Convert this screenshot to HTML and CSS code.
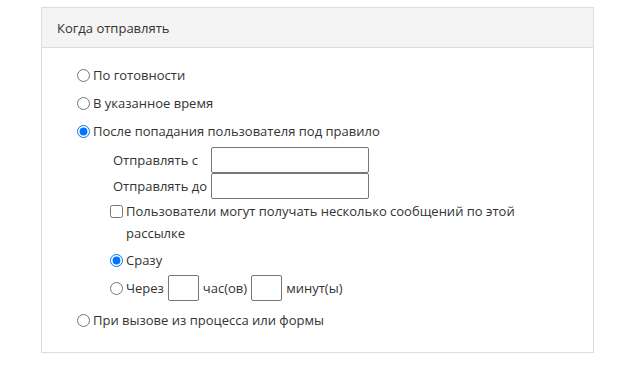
FILE: index.html
```html
<!DOCTYPE html>
<html lang="ru">
<head>
<meta charset="utf-8">
<link rel="stylesheet" href="styles.css">
</head>
<body>
<div class="panel">
  <div class="panel-head">Когда отправлять</div>
  <div class="panel-body">
    <label class="opt"><input type="radio" name="when">По готовности</label>
    <label class="opt"><input type="radio" name="when">В указанное время</label>
    <label class="opt"><input type="radio" name="when" checked>После попадания пользователя под правило</label>
    <div class="sub">
      <div class="field"><span class="flabel">Отправлять с</span><input class="text wide" type="text"></div>
      <div class="field"><span class="flabel">Отправлять до</span><input class="text wide" type="text"></div>
      <label class="check"><input type="checkbox"><span>Пользователи могут получать несколько сообщений по этой рассылке</span></label>
      <label class="opt"><input type="radio" name="delay" checked>Сразу</label>
      <div class="opt"><input type="radio" name="delay">Через<input class="text small" type="text">час(ов)<input class="text small" type="text">минут(ы)</div>
    </div>
    <label class="opt last"><input type="radio" name="when">При вызове из процесса или формы</label>
  </div>
</div>
</body>
</html>
```
FILE: styles.css
```css
html, body { margin: 0; padding: 0; background: #fff; }
body {
  font-family: "Open Sans", "Liberation Sans", sans-serif;
  font-size: 13px;
  color: #333;
}
.panel {
  margin: 7px 0 0 41px;
  width: 551px;
  border: 1px solid #dddddd;
}
.panel-head {
  height: 39px;
  background: #f4f4f4;
  border-bottom: 1px solid #dddddd;
  padding-left: 15px;
  display: flex;
  align-items: center;
}
.panel-body {
  padding: 13px 0 18px 35px;
}
.opt {
  display: flex;
  align-items: center;
  height: 28px;
}
.opt input[type=radio], .check input[type=checkbox] {
  width: 13px;
  height: 13px;
  margin: 0 3px 0 0;
  flex: none;
}
.sub {
  margin-left: 33px;
  padding-top: 2px;
}
.field {
  display: flex;
  align-items: center;
  height: 26px;
}
.flabel {
  width: 101px;
  padding-left: 3px;
  box-sizing: border-box;
  white-space: nowrap;
}
.text {
  box-sizing: border-box;
  height: 26px;
  border: 1px solid #767676;
  border-radius: 2px;
  padding: 0 4px;
  font: inherit;
  background: #fff;
}
.wide { width: 158px; }
.small { width: 31px; margin: 0 4px 0 4px; }
.check {
  display: flex;
  align-items: flex-start;
  line-height: 22px;
  width: 420px;
  margin-top: 1px;
}
.check input[type=checkbox] { margin-top: 5px; }
.check + .opt { margin-top: 2px; }
.last { margin-top: 4px; }
```
